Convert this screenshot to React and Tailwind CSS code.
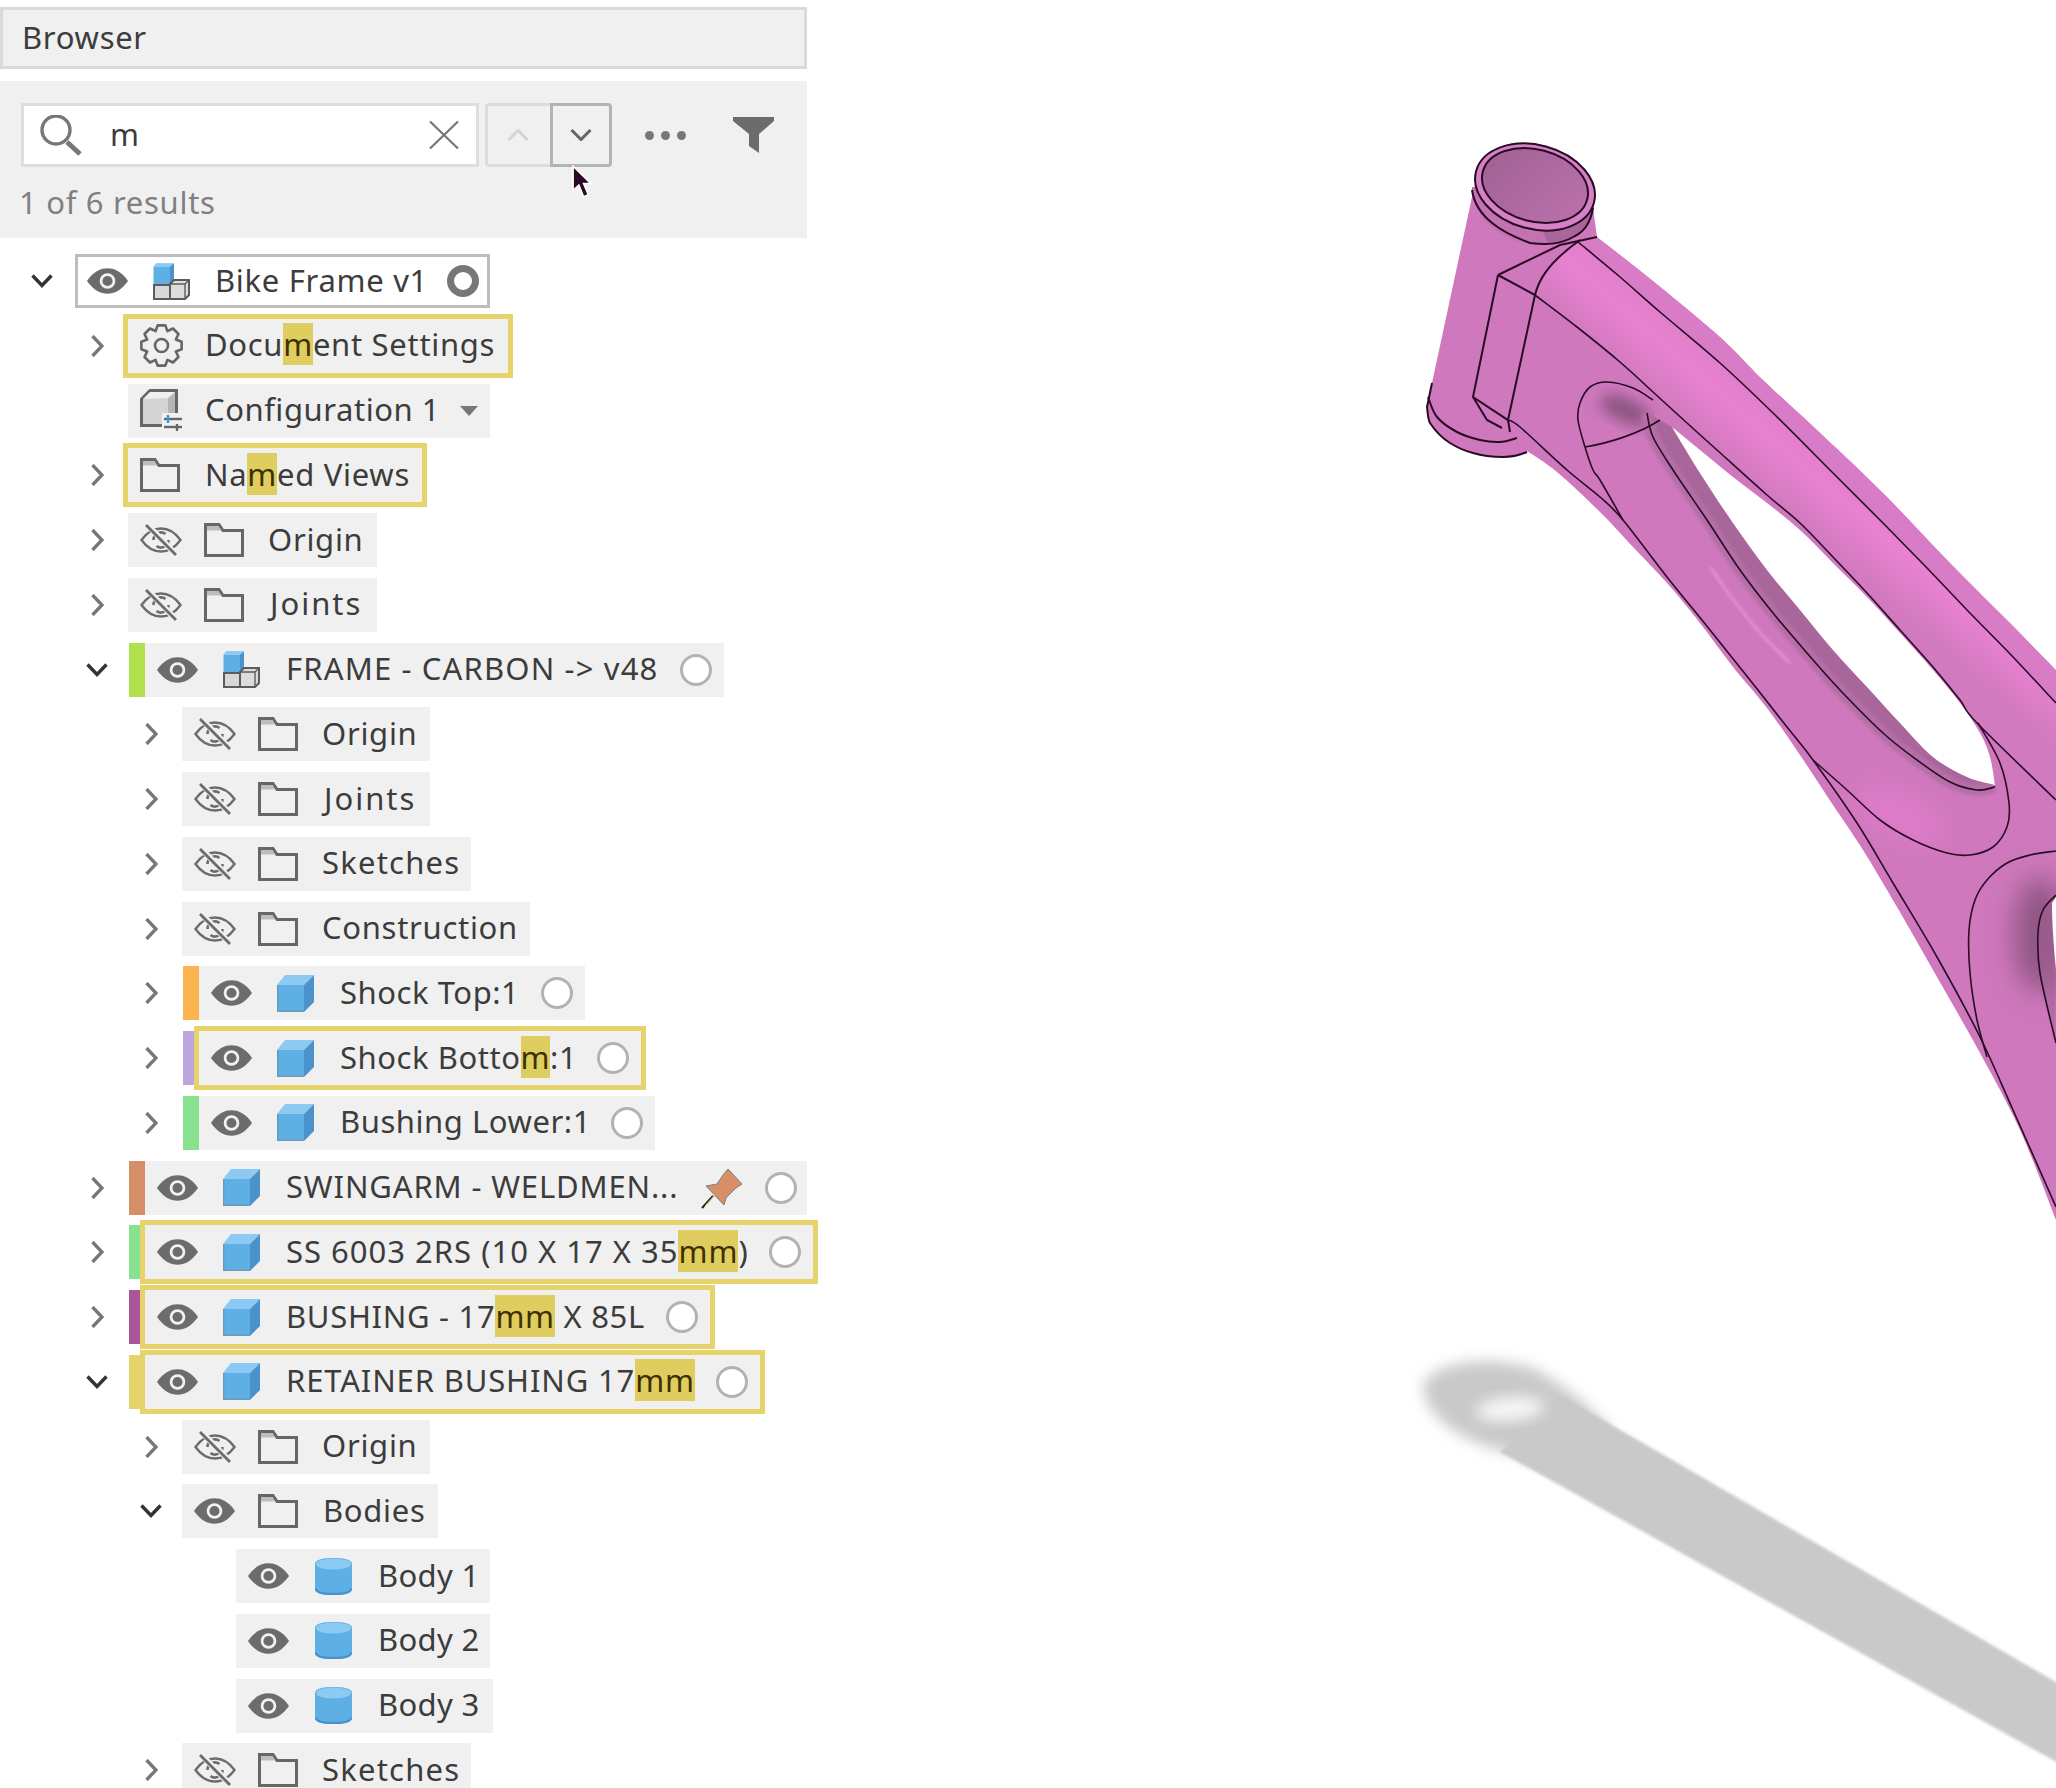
import React from 'react';

const smooth = (pts) => {
  let d = `M${pts[0][0]},${pts[0][1]}`;
  for (let i = 0; i < pts.length - 1; i++) {
    const p0 = pts[i - 1] || pts[i];
    const p1 = pts[i];
    const p2 = pts[i + 1];
    const p3 = pts[i + 2] || p2;
    d += ` C${p1[0] + (p2[0] - p0[0]) / 6},${p1[1] + (p2[1] - p0[1]) / 6} ${p2[0] - (p3[0] - p1[0]) / 6},${p2[1] - (p3[1] - p1[1]) / 6} ${p2[0]},${p2[1]}`;
  }
  return d;
};

// same curve, to be appended to a path already under way
const cont = (pts) => smooth(pts).replace('M', 'L');

function Eye() {
  return (
    <svg viewBox="0 0 44 28" className="h-[28px] w-[43px] shrink-0">
      <path d="M1 14C8 4 15 1 22 1s14 3 21 13c-7 10-14 13-21 13S8 24 1 14Z" fill="#6c6c6c" />
      <circle cx="22" cy="14" r="8" fill="#f2f2f2" />
      <circle cx="22" cy="14" r="5.2" fill="#6c6c6c" />
    </svg>
  );
}

function EyeOff() {
  return (
    <svg viewBox="0 0 42 32" className="h-[32px] w-[42px] shrink-0" fill="none" stroke="#6c6c6c">
      <path d="M1.5 16C8 7 14 4.5 21 4.5S34 7 40.5 16C34 25 28 27.5 21 27.5S8 25 1.5 16Z" strokeWidth="2.4" />
      <path d="M13.5 16a7.5 7.5 0 0 1 12-6M28.5 16a7.5 7.5 0 0 1-12 6" strokeWidth="2.6" />
      <path d="M7 0.5L37 31.5" stroke="#f0f0f0" strokeWidth="6" />
      <path d="M6 1L36 31" strokeWidth="2.8" />
    </svg>
  );
}

function Folder() {
  return (
    <svg viewBox="0 0 40 34" className="h-[34px] w-[40px] shrink-0">
      <path d="M1.5 32.5V1.5H15L19 7.5H38.5V32.5Z" fill="#f0f0f0" stroke="#666" strokeWidth="3" />
      <path d="M3 7.5V3H14L17 7.5Z" fill="#bdbdbd" />
    </svg>
  );
}

function Cube() {
  return (
    <svg viewBox="0 0 37 37" className="h-[37px] w-[37px] shrink-0">
      <path d="M0 37V10H27V37Z" fill="#5eb0e4" />
      <path d="M0 10L8 0H37L27 10Z" fill="#8ccaf3" />
      <path d="M27 10L37 0V27L27 37Z" fill="#4a92c9" />
      <path d="M0.7 36.3V10.3" stroke="#6f98b8" strokeWidth="1.4" />
      <path d="M0 36.3H27" stroke="#6f98b8" strokeWidth="1.4" />
    </svg>
  );
}

function Cylinder() {
  return (
    <svg viewBox="0 0 37 37" className="h-[37px] w-[37px] shrink-0">
      <path d="M0 6C0 1 9 0 18.5 0S37 1 37 6V31C37 36 28 37 18.5 37S0 36 0 31Z" fill="#5eb0e4" />
      <path d="M1 30.5C1 35 10 36 18.5 36S36 35 36 30.5" fill="none" stroke="#4a92c9" strokeWidth="2.4" />
      <ellipse cx="18.5" cy="6" rx="17.5" ry="5.6" fill="#8ccaf3" />
    </svg>
  );
}

function Assembly() {
  return (
    <svg viewBox="0 0 37 37" className="h-[37px] w-[37px] shrink-0">
      <path d="M0.5 22V4L3.5 0.5H21V22Z" fill="#5eb0e4" />
      <path d="M3 0.5H21L17 4H0.5Z" fill="#8ccaf3" />
      <path d="M17 4L21 0.5V22H17Z" fill="#4a92c9" />
      <rect x="1" y="22" width="16" height="14" fill="#d8d8d8" stroke="#5c5c5c" strokeWidth="2" />
      <path d="M17 36V21L21 17H36V32L32 36Z" fill="#dcdcdc" stroke="#5c5c5c" strokeWidth="2" />
      <path d="M17.5 21H32V35.5M32 21L36 17" fill="none" stroke="#5c5c5c" strokeWidth="1.4" />
    </svg>
  );
}

function Gear() {
  const n = 8;
  const pts = [];
  for (let i = 0; i < n; i++) {
    const a = (i / n) * Math.PI * 2 - Math.PI / 2;
    const step = (Math.PI * 2) / n;
    [[15.5, -0.5], [20.5, -0.24], [20.5, 0.24], [15.5, 0.5]].forEach(([r, o]) => {
      pts.push(`${(21.5 + r * Math.cos(a + o * step)).toFixed(2)},${(21.5 + r * Math.sin(a + o * step)).toFixed(2)}`);
    });
  }
  return (
    <svg viewBox="0 0 43 43" className="h-[43px] w-[43px] shrink-0" fill="none" stroke="#666" strokeWidth="2.6" strokeLinejoin="round">
      <polygon points={pts.join(' ')} />
      <circle cx="21.5" cy="21.5" r="6.5" />
    </svg>
  );
}

function ConfigIcon() {
  return (
    <svg viewBox="0 0 43 43" className="h-[43px] w-[43px] shrink-0">
      <path d="M1.5 36.5V10L10 1.5H36.5V36.5Z" fill="#d4d4d4" stroke="#666" strokeWidth="3" />
      <path d="M28 9L35 3V35H28Z" fill="#b6b6b6" />
      <path d="M3 10L10 3H35L28 9Z" fill="#efefef" />
      <rect x="22" y="24" width="21" height="19" fill="#f0f0f0" />
      <path d="M24 30H42" stroke="#666" strokeWidth="2.4" />
      <path d="M24 38H42" stroke="#666" strokeWidth="2.4" />
      <path d="M28 26V34" stroke="#3f9bd8" strokeWidth="2.6" />
      <path d="M37 35V42" stroke="#666" strokeWidth="2.4" />
    </svg>
  );
}

function Pin() {
  return (
    <svg viewBox="20 4 44 42" className="mr-[21px] h-[42px] w-[44px] shrink-0">
      <path d="M33 33L22 45" stroke="#222" strokeWidth="2" />
      <path d="M33 34L25 43" stroke="#e8d36b" strokeWidth="1" />
      <path d="M43 12L48 6L62 21L56 25L46 35L44 42L26 23L37 21Z" fill="#d68f66" stroke="#7f7f7f" strokeWidth="1" />
    </svg>
  );
}

function Chevron({ dir }) {
  if (dir === 'down') {
    return (
      <svg viewBox="0 0 22 14" className="h-[14px] w-[22px]" fill="none" stroke="#333" strokeWidth="3.4">
        <path d="M1.5 1.5L11 11.5L20.5 1.5" />
      </svg>
    );
  }
  return (
    <svg viewBox="0 0 13 22" className="h-[22px] w-[13px]" fill="none" stroke="#777" strokeWidth="3.4">
      <path d="M1.5 1L11 11L1.5 21" />
    </svg>
  );
}

function Label({ text, hit, after, className }) {
  return (
    <span className={`whitespace-pre pb-[3px] leading-[36px] ${className || ''}`}>
      {text}
      {hit && <span className="bg-[#e0cd60] text-[#3d3000]">{hit}</span>}
      {after}
    </span>
  );
}

// offset of each tree level, chevron slot is 54 wide
const levelClass = { 1: 'pl-[74px]', 2: 'pl-[128px]', 3: 'pl-[182px]' };

function Slot({ dir }) {
  return <div className="flex w-[54px] shrink-0 justify-center pr-[8px]">{dir && <Chevron dir={dir} />}</div>;
}

// plain row, grey tag with icons
function TagRow({ level, dir, width, found, children }) {
  return (
    <div className={`flex h-[54px] items-center ${levelClass[level]}`}>
      <Slot dir={dir} />
      <div className={`flex h-[54px] shrink-0 items-center bg-[#f0f0f0] pl-[12px] ${width} ${found ? 'outline-[5px] outline-[#e6d36b]' : ''}`}>{children}</div>
    </div>
  );
}

function HiddenFolder({ level, dir, width, name, shown, track }) {
  return (
    <TagRow level={level} dir={dir} width={width}>
      {shown ? <span className="-ml-px"><Eye /></span> : <EyeOff />}
      <span className="ml-[22px]">
        <Folder />
      </span>
      <Label text={name} className={`${shown ? 'ml-[25px]' : 'ml-[24px]'} ${track || ''}`} />
    </TagRow>
  );
}

// occurrence row with the colour bar in front
function PartRow({ level, dir, bar, width, found, icon, name, hit, after, pin, track }) {
  return (
    <div className={`flex h-[54px] items-center ${levelClass[level]}`}>
      <Slot dir={dir} />
      <div className={`ml-px h-[54px] w-[16px] shrink-0 ${bar}`} />
      <div className={`flex h-[54px] shrink-0 items-center bg-[#f0f0f0] pl-[11px] ${width} ${found ? 'outline-[5px] outline-[#e6d36b]' : ''}`}>
        <Eye />
        <span className="ml-[24px]">{icon === 'assembly' ? <Assembly /> : <Cube />}</span>
        <Label text={name} hit={hit} after={after} className={`ml-[26px] ${track || ''}`} />
        <span className="ml-auto" />
        {pin && <Pin />}
        <span className={`h-[32px] w-[32px] shrink-0 rounded-full border-[3px] border-[#b2b2b2] bg-white ${pin ? 'mr-[10px]' : 'mr-[12px]'}`} />
      </div>
    </div>
  );
}

function BodyRow({ name, width }) {
  return (
    <TagRow level={3} width={width}>
      <span className="-ml-px">
        <Eye />
      </span>
      <span className="ml-[25px]">
        <Cylinder />
      </span>
      <Label text={name} className="ml-[26px] tracking-[0.35px]" />
    </TagRow>
  );
}

function FrameDrawing() {
  const bottom = [[1527, 451], [1557, 472], [1600, 512], [1633, 547], [1667, 583], [1700, 623], [1733, 667], [1767, 708], [1802, 758], [1833, 805], [1863, 850], [1897, 907], [1937, 977], [1980, 1053], [2020, 1130], [2056, 1220]];
  const top = [[2056, 670], [2010, 623], [1950, 563], [1883, 493], [1817, 430], [1763, 380], [1720, 337], [1653, 281], [1597, 237]];
  const outline = `M1472,197 L1432,383 L1427,407 C1428,415 1428,420 1430,423 C1436,432 1442,438 1450,443 C1458,448 1465,451 1473,453 C1483,456 1493,457 1503,457 C1512,457 1520,455 1527,452 ${cont(bottom)} L2056,670 ${cont(top)} L1592,200 Z`;
  const l1 = [[1578, 242], [1620, 277], [1660, 312], [1720, 363], [1773, 413], [1833, 473], [1883, 523], [1927, 568], [1967, 610], [2013, 657], [2056, 703]];
  const l2 = [[1535, 295], [1577, 327], [1620, 362], [1653, 392], [1687, 423], [1717, 450], [1767, 495], [1800, 523], [1833, 557], [1867, 593], [1900, 630], [1933, 667], [1960, 700], [1977, 723], [2056, 800]];
  const l4 = [[1508, 420], [1520, 427], [1567, 470], [1600, 497], [1623, 520], [1667, 577], [1710, 630], [1750, 680], [1787, 727], [1813, 760], [1857, 823], [1893, 883], [1937, 957], [1980, 1037], [2013, 1110], [2056, 1207]];
  const l5 = [[1647, 413], [1653, 437], [1673, 470], [1707, 520], [1740, 570], [1773, 613], [1807, 653], [1840, 690], [1883, 733], [1917, 760], [1950, 782], [1977, 790], [1995, 787]];
  const upper = [[1672, 427], [1700, 450], [1733, 477], [1767, 503], [1800, 530], [1833, 563], [1867, 597], [1900, 633], [1933, 670], [1960, 703], [1980, 733], [1990, 757], [1995, 785]];
  const lower = [[1995, 785], [1967, 777], [1933, 757], [1900, 723], [1867, 687], [1833, 650], [1800, 610], [1767, 570], [1733, 523], [1700, 473], [1672, 427]];
  const oval = [[1653, 400], [1633, 388], [1607, 382], [1590, 387], [1580, 403], [1578, 420], [1585, 447], [1593, 470], [1600, 480], [1623, 520]];
  const blob = [[1978, 723], [2000, 763], [2009, 803], [2007, 827], [1993, 847], [1970, 855], [1947, 853], [1913, 840], [1880, 820], [1847, 790], [1813, 760]];
  const win2 = [[2056, 851], [2030, 855], [2007, 863], [1987, 880], [1975, 900], [1969, 930], [1970, 973], [1977, 1020], [1987, 1057]];
  const win2b = [[2056, 895], [2043, 910], [2038, 933], [2040, 973], [2056, 1043]];
  const flange = [[1428, 397], [1437, 417], [1457, 432], [1480, 440], [1500, 442], [1517, 438]];

  return (
    <svg viewBox="807 0 1249 1788" className="h-[1788px] w-[1249px] shrink-0">
      <defs>
        <linearGradient id="tube" gradientUnits="userSpaceOnUse" x1="1815" y1="440" x2="1767" y2="495">
          <stop offset="0" stopColor="#e07fca" />
          <stop offset="0.4" stopColor="#e881d1" />
          <stop offset="1" stopColor="#d27abf" />
        </linearGradient>
        <linearGradient id="hole" x1="0" y1="0" x2="1" y2="0.4">
          <stop offset="0" stopColor="#9f6193" />
          <stop offset="1" stopColor="#b86fa9" />
        </linearGradient>
        <filter id="slight" x="-5%" y="-5%" width="110%" height="110%">
          <feGaussianBlur stdDeviation="1.5" />
        </filter>
        <filter id="soft" x="-30%" y="-30%" width="160%" height="160%">
          <feGaussianBlur stdDeviation="7" />
        </filter>
        <filter id="softer" x="-60%" y="-60%" width="220%" height="220%">
          <feGaussianBlur stdDeviation="14" />
        </filter>
        <clipPath id="frame">
          <path d={outline} />
        </clipPath>
      </defs>

      <path d="M1560,1395 L2080,1696 L2080,1775 L1500,1452Z" fill="#c9c9c9" filter="url(#slight)" />
      <path d="M1423,1385 C1432,1364 1480,1354 1530,1367 C1560,1380 1590,1408 1610,1428 L1560,1470 L1509,1452 C1470,1445 1424,1420 1423,1385Z" fill="#c9c9c9" filter="url(#soft)" />
      <ellipse cx="1510" cy="1409" rx="34" ry="12" transform="rotate(-5 1510 1409)" fill="#f6f6f6" filter="url(#soft)" />

      <path d={outline} fill="#cf78bd" />
      <g clipPath="url(#frame)">
        <path d={`${smooth(top)} L1578,242 ${cont(l1)} Z`} fill="#d87cc8" />
        <path d={`${smooth(l1)} L2056,800 ${cont([...l2].reverse())} C1538,285 1545,265 1578,242 Z`} fill="url(#tube)" />
        <ellipse cx="1625" cy="410" rx="27" ry="12" transform="rotate(25 1625 410)" fill="#8d5480" filter="url(#soft)" />
        <path d={`${smooth(l5)} ${cont(lower)} Z`} fill="#a9669b" />
        <path d={smooth(l5)} fill="none" stroke="#b56ea6" strokeWidth="12" filter="url(#slight)" />
        <ellipse cx="1900" cy="815" rx="50" ry="20" transform="rotate(30 1900 815)" fill="#e07dcb" filter="url(#softer)" />
        <ellipse cx="2040" cy="935" rx="26" ry="58" fill="#8d5480" filter="url(#softer)" />
        <path d={smooth(win2b)} fill="#9f6193" opacity="0.55" filter="url(#slight)" />
        <path d="M1710,567 C1735,605 1760,635 1790,663" fill="none" stroke="#f09ade" strokeWidth="2" filter="url(#slight)" />
      </g>
      <path d={`${smooth(upper)} ${cont(lower)} Z`} fill="#fff" />
      <path d="M2052,903 L2056,897 L2056,970 C2054,950 2052,925 2052,903Z" fill="#fff" />

      <g fill="none" stroke="#2a0b26" strokeWidth="1.6">
        <path d={smooth(l1)} />
        <path d={smooth(l2)} />
        <path d={smooth(l4)} />
        <path d={smooth(l5)} />
        <path d={smooth(oval)} />
        <path d={smooth(blob)} />
        <path d={smooth(win2)} />
        <path d={smooth(win2b)} />
        <path d={smooth(flange)} strokeWidth="2" />
        <path d="M1498,275 L1535,295 M1498,275 L1473,397 L1508,420 L1535,295 M1498,275 L1560,245 L1597,237 M1473,397 L1487,420 L1502,428 M1508,420 L1510,432" strokeWidth="2" />
        <path d="M1535,295 C1538,283 1545,265 1580,240" strokeWidth="2" />
        <path d="M1585,447 C1610,443 1640,433 1660,420" />
        <path d="M1432,383 L1427,407 C1428,415 1428,420 1430,423 C1436,432 1442,438 1450,443 C1458,448 1465,451 1473,453 C1483,456 1493,457 1503,457 C1512,457 1520,455 1527,452" strokeWidth="2" />
      </g>

      <path d="M1472,187 L1472,196 C1478,222 1505,243 1535,244 C1565,245 1590,228 1594,206 L1595,187Z" fill="#c473b2" />
      <path d="M1548,244 C1570,243 1590,228 1594,206 L1590,205 L1540,225Z" fill="#a9669b" />
      <path d="M1472,190 C1476,218 1503,233 1530,243 C1545,245 1560,245 1575,236 C1585,231 1591,220 1593,208" fill="none" stroke="#2a0b26" strokeWidth="2" />
      <ellipse cx="1535" cy="187" rx="61" ry="42" transform="rotate(15 1535 187)" fill="#d680c6" stroke="#2a0b26" strokeWidth="2" />
      <ellipse cx="1535" cy="185.5" rx="54" ry="36" transform="rotate(15 1535 185.5)" fill="url(#hole)" stroke="#2a0b26" strokeWidth="2" />
    </svg>
  );
}

export default function App() {
  return (
    <div className="relative flex h-[1788px] w-[2056px] overflow-hidden bg-white font-['Noto_Sans',sans-serif] text-[31px] tracking-[0.7px] text-[#3c3c3c]">
      <div className="relative z-10 w-[807px] shrink-0 pt-[7px]">
        <div className="flex h-[62px] items-center border-[3px] border-[#dadada] bg-[#f0f0f0] pl-[19px]">
          <span className="pb-[2px]">Browser</span>
        </div>

        <div className="relative mt-[12px] h-[157px] bg-[#f0f0f0] pl-[21px] pt-[22px]">
          <div className="flex items-center">
            <div className="flex h-[64px] w-[458px] items-center border-[3px] border-[#dedede] bg-white pl-[15px]">
              <svg viewBox="0 0 43 41" className="h-[41px] w-[43px] shrink-0" fill="none" stroke="#777">
                <circle cx="17" cy="15" r="14" strokeWidth="3.4" />
                <path d="M28 27L41 39" strokeWidth="5" />
              </svg>
              <span className="ml-[28px] pb-[2px]">m</span>
              <svg viewBox="0 0 30 28" className="ml-auto mr-[17px] h-[28px] w-[30px]" fill="none" stroke="#777" strokeWidth="2.2">
                <path d="M1 0.5L29 27.5M29 0.5L1 27.5" />
              </svg>
            </div>
            <div className="ml-[6px] flex h-[64px] w-[127px] rounded-[4px]">
              <div className="flex h-full w-[65px] items-center justify-center rounded-l-[4px] border-[3px] border-r-0 border-[#dcdcdc]">
                <svg viewBox="0 0 22 12" className="mr-[3px] h-[12px] w-[22px]" fill="none" stroke="#d4d4d4" strokeWidth="3">
                  <path d="M1.5 11L11 1.5L20.5 11" />
                </svg>
              </div>
              <div className="flex h-full w-[62px] items-center justify-center rounded-r-[4px] border-[3px] border-[#b3b3b3]">
                <svg viewBox="0 0 22 12" className="h-[12px] w-[22px]" fill="none" stroke="#666" strokeWidth="3">
                  <path d="M1.5 1L11 10.5L20.5 1" />
                </svg>
              </div>
            </div>
            <div className="ml-[33px] flex gap-[7px]">
              <span className="h-[9px] w-[9px] rounded-full bg-[#777]" />
              <span className="h-[9px] w-[9px] rounded-full bg-[#777]" />
              <span className="h-[9px] w-[9px] rounded-full bg-[#777]" />
            </div>
            <svg viewBox="0 0 41 36" className="ml-[47px] h-[36px] w-[41px]">
              <path d="M0 0H41V4L26 17V36L16 29V17L0 4Z" fill="#6c6c6c" />
            </svg>
          </div>
          <div className="-ml-[2px] mt-[15px] leading-[40px] text-[#808080]">1 of 6 results</div>
          <svg viewBox="0 0 20 32" className="absolute left-[571px] top-[84px] h-[34px] w-[21px]">
            <path d="M2 1V24L7.5 19L12 30L16.5 28L12 17.5H19Z" fill="#2a0a25" stroke="#fff" strokeWidth="1.5" />
          </svg>
        </div>

        <div className="mt-[16px] flex flex-col gap-[10.75px]">
          <div className="flex h-[54px] items-center pl-[19px]">
            <Slot dir="down" />
            <div className="ml-[2px] flex h-[54px] w-[415px] items-center border-[3px] border-[#bdbdbd] bg-white pl-[8px]">
              <Eye />
              <span className="ml-[24px]">
                <Assembly />
              </span>
              <Label text="Bike Frame v1" className="ml-[25px]" />
              <span className="ml-auto mr-[8px] h-[32px] w-[32px] rounded-full border-[7px] border-[#777] bg-white" />
            </div>
          </div>

          <TagRow level={1} dir="right" width="w-[380px]" found>
            <Gear />
            <Label text="Docu" hit="m" after="ent Settings" className="ml-[22px]" />
          </TagRow>
          <TagRow level={1} width="w-[362px]">
            <ConfigIcon />
            <Label text="Configuration 1" className="ml-[22px] tracking-[0.55px]" />
            <svg viewBox="0 0 18 10" className="ml-auto mr-[12px] h-[10px] w-[18px]">
              <path d="M0 0H18L9 10Z" fill="#777" />
            </svg>
          </TagRow>
          <TagRow level={1} dir="right" width="w-[294px]" found>
            <Folder />
            <Label text="Na" hit="m" after="ed Views" className="ml-[25px]" />
          </TagRow>
          <HiddenFolder level={1} dir="right" width="w-[249px]" name="Origin" />
          <HiddenFolder level={1} dir="right" width="w-[249px]" name="Joints" track="tracking-[2px] pl-[2px]" />
          <PartRow level={1} dir="down" bar="bg-[#b1e04f]" width="w-[579px]" icon="assembly" name="FRAME - CARBON -> v48" track="tracking-[1.15px]" />
          <HiddenFolder level={2} dir="right" width="w-[248px]" name="Origin" />
          <HiddenFolder level={2} dir="right" width="w-[248px]" name="Joints" track="tracking-[2px] pl-[2px]" />
          <HiddenFolder level={2} dir="right" width="w-[289px]" name="Sketches" track="tracking-[1.2px]" />
          <HiddenFolder level={2} dir="right" width="w-[348px]" name="Construction" />
          <PartRow level={2} dir="right" bar="bg-[#fbb550]" width="w-[386px]" name="Shock Top:1" track="tracking-[0.55px]" />
          <PartRow level={2} dir="right" bar="bg-[#bda6dc]" width="w-[442px]" found name="Shock Botto" hit="m" after=":1" track="tracking-[0.55px]" />
          <PartRow level={2} dir="right" bar="bg-[#88e18e]" width="w-[456px]" name="Bushing Lower:1" track="tracking-[0.55px]" />
          <PartRow level={1} dir="right" bar="bg-[#d58e68]" width="w-[662px]" name="SWINGARM - WELDMEN..." pin track="tracking-[0.85px]" />
          <PartRow level={1} dir="right" bar="bg-[#88e18e]" width="w-[668px]" found name="SS 6003 2RS (10 X 17 X 35" hit="mm" after=")" track="tracking-[1px]" />
          <PartRow level={1} dir="right" bar="bg-[#a9569a]" width="w-[565px]" found name="BUSHING - 17" hit="mm" after=" X 85L" />
          <PartRow level={1} dir="down" bar="bg-[#e6d36b]" width="w-[615px]" found name="RETAINER BUSHING 17" hit="mm" track="tracking-[0.85px]" />
          <HiddenFolder level={2} dir="right" width="w-[248px]" name="Origin" />
          <HiddenFolder level={2} dir="down" width="w-[256px]" name="Bodies" shown />
          <BodyRow name="Body 1" width="w-[254px]" />
          <BodyRow name="Body 2" width="w-[254px]" />
          <BodyRow name="Body 3" width="w-[257px]" />
          <HiddenFolder level={2} dir="right" width="w-[289px]" name="Sketches" track="tracking-[1.2px]" />
        </div>
      </div>

      <FrameDrawing />
    </div>
  );
}
